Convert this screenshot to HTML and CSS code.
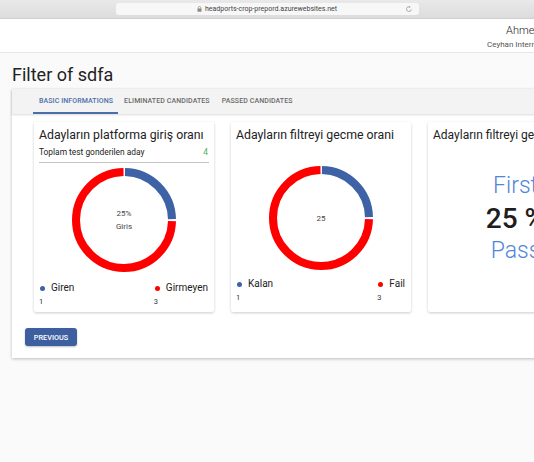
FILE: index.html
```html
<!DOCTYPE html>
<html>
<head>
<meta charset="utf-8">
<link rel="stylesheet" href="styles.css">
</head>
<body>
<div class="chrome">
  <div class="url">
    <svg class="lock" width="5" height="6" viewBox="0 0 5 6"><rect x="0.5" y="2.5" width="4" height="3.2" fill="#888"/><path d="M1.3 2.6V1.7a1.2 1.2 0 0 1 2.4 0v0.9" fill="none" stroke="#888" stroke-width="0.7"/></svg>
    <span>headports-crop-prepord.azurewebsites.net</span>
    <svg class="reload" width="8" height="8" viewBox="0 0 8 8"><path d="M6.3 4.3A2.4 2.4 0 1 1 4.8 1.9" fill="none" stroke="#999" stroke-width="0.8"/><path d="M4.2 0.9l1.5 1.1-1.4 1.1z" fill="#999"/></svg>
  </div>
</div>
<div class="header">
  <div class="user">
    <div class="user-name">Ahmet Ceyhan</div>
    <div class="user-org">Ceyhan International</div>
  </div>
</div>
<div class="page">
  <h1 class="title">Filter of sdfa</h1>
  <div class="panel">
    <div class="tabs">
      <div class="tab active">BASIC INFORMATIONS</div>
      <div class="tab">ELIMINATED CANDIDATES</div>
      <div class="tab">PASSED CANDIDATES</div>
    </div>
    <div class="panel-body">
      <div class="cards">
        <div class="card">
          <div class="card-title">Adayların platforma giriş oranı</div>
          <div class="total-row"><span>Toplam test gonderilen aday</span><span class="total-num">4</span></div>
          <div class="donut donut-1">
            <svg width="104" height="104" viewBox="0 0 104 104">
              <g transform="rotate(-90 52 52)">
                <circle cx="52" cy="52" r="48" fill="none" stroke="#ff0000" stroke-width="8" stroke-dasharray="224.2 400" stroke-dashoffset="-76.4"/>
                <circle cx="52" cy="52" r="48" fill="none" stroke="#3d63a6" stroke-width="8" stroke-dasharray="73.4 400" stroke-dashoffset="-1"/>
              </g>
            </svg>
            <div class="donut-label"><div>25%</div><div class="donut-sub">Giris</div></div>
          </div>
          <div class="legend legend-1">
            <div class="legend-item">
              <div class="legend-key"><span class="dot blue"></span>Giren</div>
              <div class="legend-val">1</div>
            </div>
            <div class="legend-item">
              <div class="legend-key"><span class="dot red"></span>Girmeyen</div>
              <div class="legend-val">3</div>
            </div>
          </div>
        </div>
        <div class="card">
          <div class="card-title">Adayların filtreyi gecme orani</div>
          <div class="donut donut-2">
            <svg width="104" height="104" viewBox="0 0 104 104">
              <g transform="rotate(-90 52 52)">
                <circle cx="52" cy="52" r="48" fill="none" stroke="#ff0000" stroke-width="8" stroke-dasharray="224.2 400" stroke-dashoffset="-76.4"/>
                <circle cx="52" cy="52" r="48" fill="none" stroke="#3d63a6" stroke-width="8" stroke-dasharray="73.4 400" stroke-dashoffset="-1"/>
              </g>
            </svg>
            <div class="donut-label"><div>25</div></div>
          </div>
          <div class="legend legend-2">
            <div class="legend-item">
              <div class="legend-key"><span class="dot blue"></span>Kalan</div>
              <div class="legend-val">1</div>
            </div>
            <div class="legend-item">
              <div class="legend-key"><span class="dot red"></span>Fail</div>
              <div class="legend-val">3</div>
            </div>
          </div>
        </div>
        <div class="card card-3">
          <div class="card-title small">Adayların filtreyi gecme orani</div>
          <div class="stat">
            <div class="stat-label">First</div>
            <div class="stat-value">25 %</div>
            <div class="stat-label">Pass</div>
          </div>
        </div>
      </div>
      <button class="btn">PREVIOUS</button>
    </div>
  </div>
</div>
</body>
</html>
```

FILE: styles.css
```css
* { box-sizing: border-box; }
html, body { margin: 0; padding: 0; }
body {
  width: 534px;
  height: 462px;
  overflow: hidden;
  background: #fafafa;
  font-family: Roboto, "Liberation Sans", sans-serif;
  color: #333;
}
.chrome {
  height: 19px;
  background: linear-gradient(#e9e9e9, #dcdcdc);
  border-bottom: 1px solid #cfcfcf;
  display: flex;
  justify-content: center;
  padding-top: 3px;
}
.url {
  width: 303px;
  height: 12px;
  background: #f7f7f7;
  border-radius: 3px;
  display: flex;
  align-items: center;
  justify-content: center;
  position: relative;
  font-size: 7px;
  color: #444;
  gap: 3px;
}
.reload { position: absolute; right: 6px; top: 2px; }
.header {
  height: 34px;
  background: #fff;
  border-bottom: 1px solid #e6e6e6;
  display: flex;
}
.user {
  margin-left: 487px;
  padding-top: 4px;
  white-space: nowrap;
}
.user-name {
  font-size: 11px;
  font-weight: 300;
  line-height: 15px;
  padding-left: 19px;
  color: #222;
}
.user-org {
  font-size: 8px;
  line-height: 11px;
  margin-top: 1px;
  color: #555;
}
.page { padding-left: 12px; }
.title {
  margin: 10px 0 2px;
  font-size: 18px;
  font-weight: 400;
  line-height: 24px;
  color: #222;
}
.panel {
  width: 560px;
  background: #fff;
  box-shadow: 0 1px 3px rgba(0,0,0,0.25);
}
.tabs {
  height: 25px;
  background: #f3f3f3;
  display: flex;
  padding-left: 21px;
  box-shadow: 0 1px 2px rgba(0,0,0,0.15);
  position: relative;
}
.tab {
  font-size: 7px;
  font-weight: 500;
  color: #6a6a6a;
  padding: 0 6px;
  line-height: 25px;
  letter-spacing: 0.1px;
}
.tab.active {
  color: #4a6ea8;
  border-bottom: 2px solid #4a6ea8;
  padding-right: 5px;
}
.panel-body {
  padding: 8px 0 12px 13px;
}
.cards {
  display: flex;
  gap: 17px;
  margin-left: 9px;
}
.card {
  width: 180px;
  height: 190px;
  flex-shrink: 0;
  padding: 5px 5px 0;
  background: #fff;
  box-shadow: 0 1px 3px rgba(0,0,0,0.2);
  border-radius: 2px;
  display: flex;
  flex-direction: column;
}
.card-title {
  font-size: 12.3px;
  line-height: 16px;
  color: #222;
  white-space: nowrap;
}
.card-title.small { font-size: 12px; }
.total-row {
  margin-top: 4px;
  font-size: 8.4px;
  line-height: 11px;
  padding-bottom: 4px;
  border-bottom: 1.5px solid #c4c4c4;
  display: flex;
  justify-content: space-between;
  color: #222;
}
.total-num { color: #4caf50; padding-right: 1px; }
.donut {
  position: relative;
  width: 104px;
  height: 104px;
  align-self: center;
}
.donut svg { display: block; }
.donut-1 { margin-top: 5px; }
.donut-2 { margin-top: 23px; }
.donut-label {
  position: absolute;
  inset: 0;
  display: flex;
  flex-direction: column;
  align-items: center;
  justify-content: center;
  font-size: 8px;
  line-height: 13px;
  color: #444;
}
.legend {
  display: flex;
  justify-content: space-between;
  padding-right: 1px;
}
.legend-1 { margin-top: 10px; }
.legend-2 { margin-top: 8px; }
.legend-key {
  display: flex;
  align-items: center;
  font-size: 10px;
  line-height: 12px;
  color: #222;
}
.dot {
  width: 5px;
  height: 5px;
  border-radius: 50%;
  margin: 0 6px 0 1px;
}
.dot.blue { background: #3d63a6; }
.dot.red { background: #ff0000; }
.legend-val {
  font-size: 7.5px;
  line-height: 9px;
  margin-top: 3px;
  color: #333;
}
.stat {
  margin-top: 27px;
  padding-right: 5px;
  text-align: center;
}
.stat-label {
  font-size: 23px;
  font-weight: 300;
  line-height: 32px;
  color: #4f86d8;
}
.stat-value {
  font-size: 28px;
  font-weight: 500;
  line-height: 33px;
  color: #1e1e1e;
}
.btn {
  margin-top: 16px;
  display: block;
  height: 18px;
  width: 52px;
  padding: 0;
  border: none;
  border-radius: 3px;
  background: #3d5f9f;
  color: #fff;
  font-family: Roboto, "Liberation Sans", sans-serif;
  font-size: 7.3px;
  font-weight: 500;
  box-shadow: 0 1px 2px rgba(0,0,0,0.25);
}
```
